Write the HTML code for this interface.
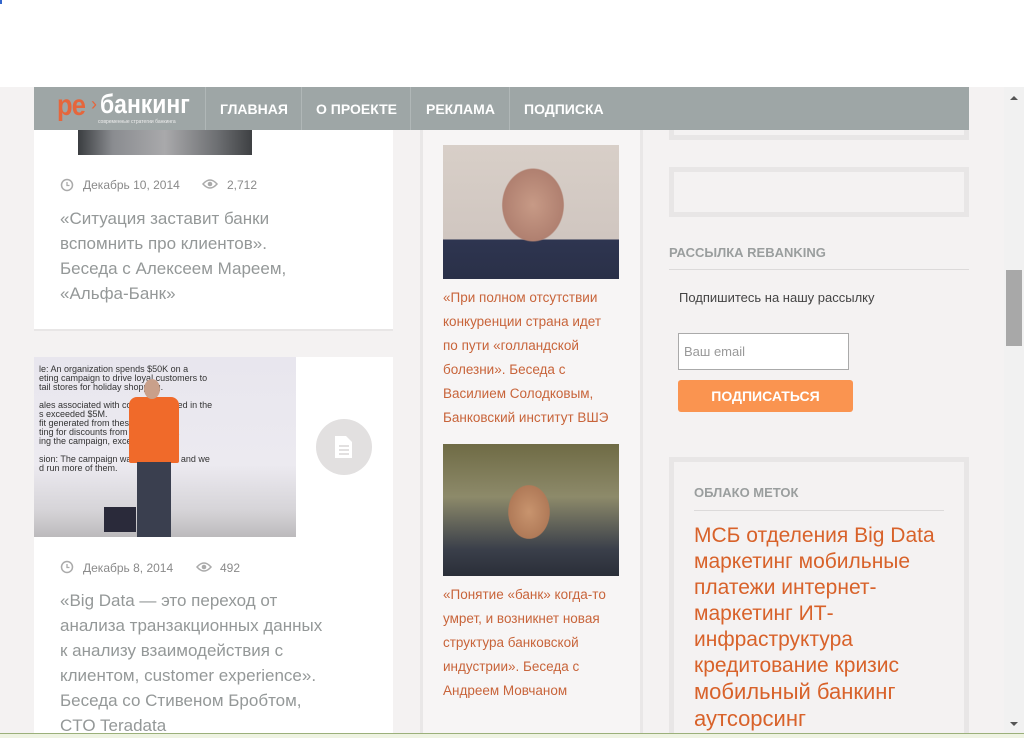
<!DOCTYPE html>
<html><head><meta charset="utf-8"><style>
*{margin:0;padding:0;box-sizing:border-box}
html,body{width:1024px;height:738px;overflow:hidden}
body{background:#f4f2f2;font-family:"Liberation Sans",sans-serif;position:relative}
.abs{position:absolute}
.meta{font-size:12px;color:#8a8a8a}
.title{font-size:17px;line-height:25px;color:#949898;white-space:nowrap}
.mid{font-size:13.5px;line-height:24px;color:#c8643a}
.nav a{position:absolute;top:14px;color:#fff;font-weight:bold;font-size:14px;text-decoration:none}
</style></head><body>
<div class="abs" style="left:0;top:0;width:1024px;height:87px;background:#fff"></div>
<div class="abs" style="left:0;top:0;width:2px;height:4px;background:#36c"></div>

<!-- left column -->
<div class="abs" style="left:34px;top:87px;width:359px;height:244px;background:#fff;border-bottom:2px solid #e8e6e6"></div>
<div class="abs" style="left:78px;top:120px;width:174px;height:35px;background:linear-gradient(90deg,#3a3d40,#8a8c90 20%,#a9a9ab 50%,#6d6f72 80%,#3e4043)"></div>
<svg class="abs" style="left:60px;top:178px" width="14" height="14"><circle cx="7" cy="7" r="5.5" fill="none" stroke="#aaa" stroke-width="1.5"/><path d="M7 4v3.5h2.5" stroke="#aaa" fill="none" stroke-width="1.3"/></svg>
<div class="abs meta" style="left:83px;top:178px">Декабрь 10, 2014</div>
<svg class="abs" style="left:202px;top:178px" width="16" height="12"><path d="M1 6Q8 -2 15 6Q8 14 1 6Z" fill="none" stroke="#aaa" stroke-width="1.5"/><circle cx="8" cy="6" r="2.3" fill="#aaa"/></svg>
<div class="abs meta" style="left:227px;top:178px">2,712</div>
<div class="abs title" style="left:60px;top:206px">«Ситуация заставит банки<br>вспомнить про клиентов».<br>Беседа с Алексеем Мареем,<br>«Альфа-Банк»</div>

<div class="abs" style="left:34px;top:357px;width:359px;height:381px;background:#fff"></div>
<div class="abs" style="left:34px;top:357px;width:262px;height:180px;background:linear-gradient(180deg,#e8e6ee 0%,#eceaf0 60%,#d6d4d8 85%,#bcbabc 100%);overflow:hidden">
<div style="position:absolute;left:5px;top:8px;font-size:9px;line-height:9px;color:#333;white-space:pre">le: An organization spends $50K on a
eting campaign to drive loyal customers to
tail stores for holiday shopping.

ales associated with coupons cashed in the
s exceeded $5M.
fit generated from these after
ting for discounts from and the cost
ing the campaign, exceeded $500.

sion: The campaign was a success and we
d run more of them.</div>
<div style="position:absolute;left:95px;top:40px;width:50px;height:66px;background:#f06a2a;border-radius:8px 8px 2px 2px"></div>
<div style="position:absolute;left:103px;top:105px;width:34px;height:75px;background:#3a3f4f"></div>
<div style="position:absolute;left:110px;top:22px;width:16px;height:20px;background:#c9a08a;border-radius:50%"></div>
<div style="position:absolute;left:70px;top:150px;width:32px;height:25px;background:#2a2a3a"></div>
</div>
<div class="abs" style="left:316px;top:419px;width:56px;height:56px;border-radius:50%;background:#e2e0e0"></div>
<svg class="abs" style="left:333px;top:434px" width="22" height="26"><path d="M2 2h11l6 6v16H2Z" fill="#fff"/><path d="M6 12h10M6 16h10M6 20h10" stroke="#e2e0e0" stroke-width="2"/></svg>
<svg class="abs" style="left:60px;top:560px" width="14" height="14"><circle cx="7" cy="7" r="5.5" fill="none" stroke="#aaa" stroke-width="1.5"/><path d="M7 4v3.5h2.5" stroke="#aaa" fill="none" stroke-width="1.3"/></svg>
<div class="abs meta" style="left:83px;top:561px">Декабрь 8, 2014</div>
<svg class="abs" style="left:196px;top:561px" width="16" height="12"><path d="M1 6Q8 -2 15 6Q8 14 1 6Z" fill="none" stroke="#aaa" stroke-width="1.5"/><circle cx="8" cy="6" r="2.3" fill="#aaa"/></svg>
<div class="abs meta" style="left:220px;top:561px">492</div>
<div class="abs title" style="left:60px;top:588px">«Big Data — это переход от<br>анализа транзакционных данных<br>к анализу взаимодействия с<br>клиентом, customer experience».<br>Беседа со Стивеном Бробтом,<br>CTO Teradata</div>

<!-- middle column -->
<div class="abs" style="left:420px;top:87px;width:223px;height:651px;background:#f7f5f5;border-left:3px solid #e9e7e7;border-right:3px solid #e9e7e7"></div>
<div class="abs" style="left:443px;top:145px;width:176px;height:134px;background:radial-gradient(ellipse 55px 65px at 90px 60px,#c79a86 0%,#b08070 55%,transparent 57%),linear-gradient(180deg,#d8cfc8 0%,#d0c6c0 70%,#2e3550 71%,#2a3048 100%)"></div>
<div class="abs mid" style="left:443px;top:286px;width:176px">«При полном отсутствии конкуренции страна идет по пути «голландской болезни». Беседа с Василием Солодковым, Банковский институт ВШЭ</div>
<div class="abs" style="left:443px;top:444px;width:176px;height:132px;background:radial-gradient(ellipse 34px 44px at 86px 68px,#c8946e 0%,#b07a58 60%,transparent 62%),linear-gradient(180deg,#6f6b45 0%,#8d8a6a 40%,#3a3f4a 80%,#2a2e38 100%)"></div>
<div class="abs mid" style="left:443px;top:583px;width:176px">«Понятие «банк» когда-то умрет, и возникнет новая структура банковской индустрии». Беседа с Андреем Мовчаном</div>

<!-- right column -->
<div class="abs" style="left:669px;top:87px;width:300px;height:53px;border:5px solid #e8e6e6;border-top:none"></div>
<div class="abs" style="left:669px;top:167px;width:300px;height:50px;border:5px solid #e8e6e6"></div>
<div class="abs" style="left:669px;top:245px;font-size:13px;font-weight:bold;color:#9a9e9e">РАССЫЛКА REBANKING</div>
<div class="abs" style="left:669px;top:269px;width:300px;height:1px;background:#dcdada"></div>
<div class="abs" style="left:679px;top:290px;font-size:13px;color:#444">Подпишитесь на нашу рассылку</div>
<div class="abs" style="left:678px;top:333px;width:171px;height:37px;background:#fff;border:1px solid #aaa;font-size:13px;color:#999;padding:10px 5px">Ваш email</div>
<div class="abs" style="left:678px;top:380px;width:175px;height:32px;background:#fa9450;border-radius:3px;color:#fff;font-weight:bold;font-size:14px;text-align:center;line-height:32px">ПОДПИСАТЬСЯ</div>
<div class="abs" style="left:669px;top:457px;width:300px;height:281px;border:5px solid #e8e6e6;border-bottom:none"></div>
<div class="abs" style="left:694px;top:485px;font-size:13px;font-weight:bold;color:#9a9e9e">ОБЛАКО МЕТОК</div>
<div class="abs" style="left:694px;top:510px;width:250px;height:1px;background:#dcdada"></div>
<div class="abs" style="left:694px;top:523px;width:250px;font-size:21px;line-height:26px;color:#d8622a">МСБ отделения Big Data маркетинг мобильные платежи интернет-маркетинг ИТ-инфраструктура кредитование кризис <span style="font-size:22px">мобильный банкинг аутсорсинг</span></div>

<!-- nav -->
<div class="abs nav" style="left:34px;top:87px;width:935px;height:43px;background:#9ea6a6">
<div style="position:absolute;left:23px;top:2px;font-size:30px;font-weight:bold;color:#e5663c;letter-spacing:-1px;transform:scaleX(.85);transform-origin:left">ре</div>
<div style="position:absolute;left:57px;top:7px;font-size:18px;color:#e5663c">›</div>
<div style="position:absolute;left:66px;top:2px;font-size:27px;font-weight:bold;color:#fff;transform:scaleX(.85);transform-origin:left">банкинг</div>
<div style="position:absolute;left:64px;top:32px;font-size:5px;color:#eee">современные стратегии банкинга</div>
<div style="position:absolute;left:171px;top:0;width:1px;height:43px;background:#b0b7b7"></div>
<a style="left:186px">ГЛАВНАЯ</a>
<div style="position:absolute;left:267px;top:0;width:1px;height:43px;background:#b0b7b7"></div>
<a style="left:282px">О ПРОЕКТЕ</a>
<div style="position:absolute;left:376px;top:0;width:1px;height:43px;background:#b0b7b7"></div>
<a style="left:392px">РЕКЛАМА</a>
<div style="position:absolute;left:475px;top:0;width:1px;height:43px;background:#b0b7b7"></div>
<a style="left:490px">ПОДПИСКА</a>
</div>

<!-- scrollbar -->
<div class="abs" style="left:1004px;top:87px;width:20px;height:646px;background:#f1f1f1"></div>
<div class="abs" style="left:1010px;top:96px;width:0;height:0;border:4px solid transparent;border-bottom:4px solid #555;border-top:none"></div>
<div class="abs" style="left:1006px;top:270px;width:16px;height:76px;background:#a8a8a8"></div>
<div class="abs" style="left:1010px;top:722px;width:0;height:0;border:4px solid transparent;border-top:4px solid #555;border-bottom:none"></div>
<div class="abs" style="left:0;top:733px;width:1024px;height:5px;background:#eef3e2;border-top:1px solid #9bb07a"></div>
</body></html>
